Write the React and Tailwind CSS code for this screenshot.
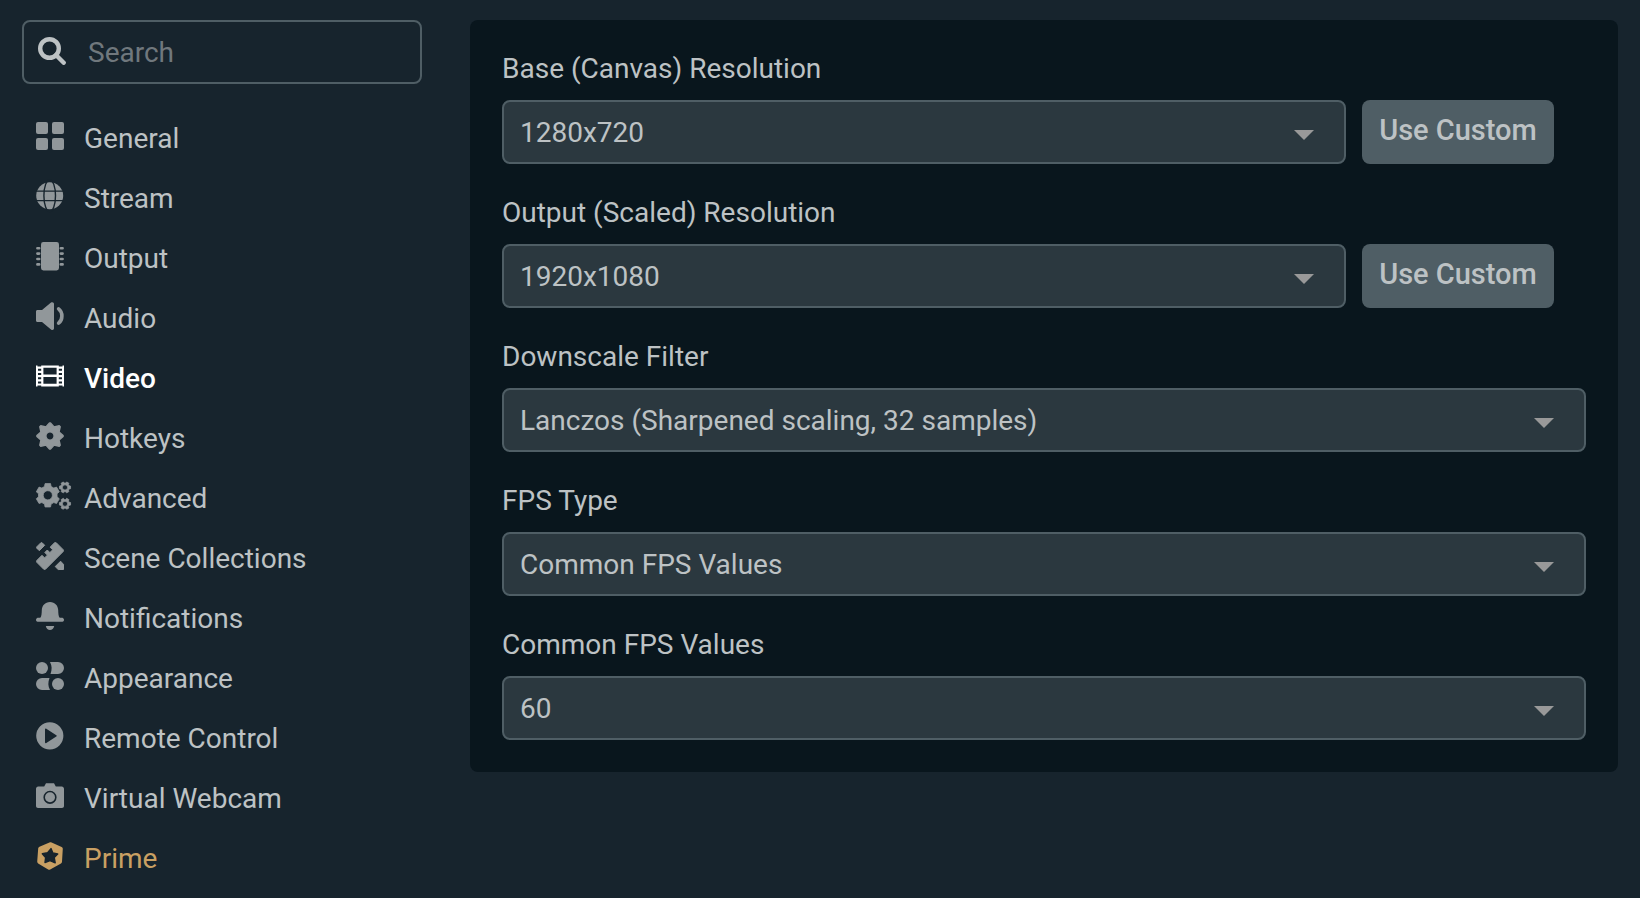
import { useState } from "react";

function gearPath(cx, cy, r, inner, hole, teeth, turn = 0) {
  const pts = [];
  const step = (Math.PI * 2) / teeth;
  for (let i = 0; i < teeth; i++) {
    const a = i * step - Math.PI / 2 + turn;
    [
      [-0.34, inner],
      [-0.22, r],
      [0.22, r],
      [0.34, inner],
    ].forEach(([f, rad]) => {
      pts.push(`${(cx + Math.cos(a + f * step) * rad).toFixed(2)} ${(cy + Math.sin(a + f * step) * rad).toFixed(2)}`);
    });
  }
  return `M${pts.join("L")}ZM${cx - hole} ${cy}a${hole} ${hole} 0 1 0 ${hole * 2} 0a${hole} ${hole} 0 1 0 ${-hole * 2} 0Z`;
}

const icons = {
  general: (
    <g>
      <rect x="0" y="0" width="12" height="12" rx="2" />
      <rect x="16" y="0" width="12" height="12" rx="2" />
      <rect x="0" y="16" width="12" height="12" rx="2" />
      <rect x="16" y="16" width="12" height="12" rx="2" />
    </g>
  ),
  stream: (
    <g>
      <circle cx="13.7" cy="13.7" r="13.5" />
      <g fill="none" stroke="#17242d" strokeWidth="1.4">
        <path d="M0 9.1h28M0 18.6h28" />
        <ellipse cx="13.7" cy="13.7" rx="5.8" ry="16" />
      </g>
    </g>
  ),
  output: (
    <g>
      <rect x="5" y="0" width="18" height="28.4" rx="2.4" />
      <path
        d="M1.400 6.300H3.200M1.400 11.600H3.200M1.400 17H3.200M1.400 22.400H3.200M24.800 6.300h1.800M24.800 11.600h1.800M24.800 17h1.800M24.800 22.400h1.800"
        fill="none"
        stroke="currentColor"
        strokeWidth="2.6"
        strokeLinecap="round"
      />
    </g>
  ),
  audio: (
    <g>
      <path d="M1.500 8H6L15 .6C16.400-.4 18 .3 18 2v24.200c0 1.700-1.600 2.200-3 1.200L6 20H1.500C.6 20 0 19.400 0 18.500v-9C0 8.600.6 8 1.500 8Z" />
      <path
        d="M22.600 6.800c4.400 3.400 4.400 11 0 14.400"
        fill="none"
        stroke="currentColor"
        strokeWidth="3.600"
        strokeLinecap="round"
      />
    </g>
  ),
  video: (
    <path
      fillRule="evenodd"
      d="M0 3.400h1.500v1h3.700v-1h17.600v1h3.700v-1H28v21h-1.500v-1h-3.700v1H5.200v-1H1.500v1H0ZM7.400 5.800v6.700h13.200V5.800ZM7.400 15v6.800h13.200V15ZM2 6.800v2H5.200v-2ZM2 11v2H5.200v-2ZM2 15.200v2H5.200v-2ZM2 19.400v2H5.200v-2ZM22.800 6.800v2H26v-2ZM22.800 11v2H26v-2ZM22.800 15.200v2H26v-2ZM22.800 19.400v2H26v-2Z"
    />
  ),
  hotkeys: (
    <path
      fillRule="evenodd"
      stroke="currentColor"
      strokeWidth="1.400"
      strokeLinejoin="round"
      d="M13.500.9h1L18.100 4.900 23.200 3.800 24.200 4.800 23.100 9.900 27.100 13.500v1L23.100 18.100 24.200 23.200 23.200 24.200 18.100 23.100 14.500 27.100h-1L9.900 23.100 4.800 24.200 3.800 23.200 4.900 18.100 .9 14.500v-1L4.900 9.900 3.800 4.800 4.800 3.800 9.900 4.900ZM14 9.900a4.100 4.100 0 1 0 0 8.200a4.100 4.100 0 1 0 0-8.200Z"
    />
  ),
  advanced: (
    <g fillRule="evenodd" stroke="currentColor" strokeWidth="0.8" strokeLinejoin="round">
      <path d={gearPath(11.8, 13.3, 12, 9.4, 4.6, 6)} />
      <path d={gearPath(29, 5.4, 5.7, 4.4, 2.6, 6, Math.PI / 6)} />
      <path d={gearPath(29, 21.8, 5.7, 4.4, 2.6, 6, Math.PI / 6)} />
    </g>
  ),
  scene: (
    <g stroke="currentColor" strokeWidth="1" strokeLinejoin="round">
      <path d="M4.800.8Q5.500.3 6.200.8L8.700 3.300 3.300 8.700.8 6.200Q.3 5.500.8 4.800Z" />
      <path d="M18.500.8Q19.400.2 20.300.8L27.200 7.700Q27.800 8.600 27.200 9.500L9.500 27.200Q8.600 27.800 7.700 27.200L.8 20.300Q.2 19.400.8 18.500L6 13.300 8.600 15.900 11.400 13.100 8.800 10.500 11.300 8 13.900 10.600 16.700 7.800 14.100 5.200Z" />
      <path d="M24.600 19.200 27.500 22.400V27.500H22.200L19.200 24.600Z" />
    </g>
  ),
  notifications: (
    <g>
      <path d="M14 0c5 0 8 3.800 8.200 8 .1 3.600.3 6.300 1.500 7.700h2.800c2 .8 2 3.600 0 4H1.500c-2-.4-2-3.200 0-4h2.800C5.500 14.300 5.700 11.600 5.800 8 6 3.800 9 0 14 0Z" />
      <path d="M9.800 24h8.400c-.5 2.600-2.200 4-4.200 4s-3.700-1.400-4.200-4Z" />
    </g>
  ),
  appearance: (
    <g>
      <circle cx="6" cy="6" r="6" />
      <circle cx="22" cy="22" r="6" />
      <path d="M14 0h8a6 6 0 0 1 0 12h-7.500c1.600-4.400 1.600-8-.5-12Z" />
      <path d="M13.500 16H6a6 6 0 0 0 0 12h8c-2.100-4-2.100-7.600-.5-12Z" />
    </g>
  ),
  remote: (
    <path
      fillRule="evenodd"
      d="M13.800.2a13.600 13.600 0 1 0 0 27.200 13.600 13.600 0 1 0 0-27.200ZM9 7.500v12.800c0 .8.700 1.100 1.300.7l10-6.400c.6-.4.600-1 0-1.400l-10-6.400C9.700 6.400 9 6.700 9 7.500Z"
    />
  ),
  webcam: (
    <g>
      <path
        fillRule="evenodd"
        d="M10 1.300h8l1.800 3.200h6C27 4.500 28 5.500 28 6.800V24c0 1.200-.9 2-2 2H2c-1.100 0-2-.8-2-2V6.800C0 5.500 1 4.500 2.200 4.500h6ZM14 8.700a6.600 6.600 0 1 0 0 13.200 6.600 6.600 0 1 0 0-13.200Z"
      />
      <circle cx="14" cy="15.300" r="5" />
    </g>
  ),
  prime: (
    <g strokeLinejoin="round">
      <path stroke="currentColor" strokeWidth="4" d="M14.800 2.200 24.800 6.700 24 19.700 13.200 25.800 3.200 19.700 4.200 6.500Z" />
      <path
        fill="#17242d"
        stroke="#17242d"
        strokeWidth="1.400"
        d="M15 6.600 16.900 11 21.700 12 18.200 15.400 19.200 20.900 14 18.700 9 20.600 9.600 15.500 6.300 11.700 11.600 10.800Z"
      />
    </g>
  ),
};

const nav = [
  ["general", "General"],
  ["stream", "Stream"],
  ["output", "Output"],
  ["audio", "Audio"],
  ["video", "Video"],
  ["hotkeys", "Hotkeys"],
  ["advanced", "Advanced"],
  ["scene", "Scene Collections"],
  ["notifications", "Notifications"],
  ["appearance", "Appearance"],
  ["remote", "Remote Control"],
  ["webcam", "Virtual Webcam"],
  ["prime", "Prime"],
];

function NavItem({ id, label, active, onSelect }) {
  let text = "text-[#bdc2c4]";
  let icon = "text-[#91979a]";
  if (active) {
    text = "text-white font-medium";
    icon = "text-white";
  } else if (id === "prime") {
    text = "text-[#c9a063]";
    icon = "text-[#c9a063]";
  }
  return (
    <li>
      <a
        href={`#${id}`}
        aria-current={active ? "page" : undefined}
        onClick={() => onSelect(id)}
        className={`flex h-[60px] items-center gap-5 pl-9 ${text}`}
      >
        <svg viewBox="0 0 28 28" fill="currentColor" aria-hidden="true" className={`mb-1 size-7 shrink-0 overflow-visible ${icon}`}>
          {icons[id]}
        </svg>
        <span className="pt-0.5">{label}</span>
      </a>
    </li>
  );
}

function Field({ id, label, value, custom }) {
  return (
    <div>
      <label htmlFor={id} className="block leading-[34px]">
        {label}
      </label>
      <div className={custom ? "mt-[14px] flex gap-4 pr-8" : "mt-[14px] flex"}>
        <div className="relative min-w-0 flex-1">
          <select
            id={id}
            defaultValue={value}
            className="block h-16 w-full appearance-none rounded-lg border-2 border-[#4f5e65] bg-[#2b383f] pl-4 pr-20 pt-0.5 text-[#bdc2c4]"
          >
            <option>{value}</option>
          </select>
          <svg
            viewBox="0 0 20 10"
            aria-hidden="true"
            className="pointer-events-none absolute right-8 top-[30px] h-[10px] w-5 fill-[#999999]"
          >
            <path d="M0 0h20L10 10Z" />
          </svg>
        </div>
        {custom && (
          <button type="button" className="h-16 w-48 shrink-0 rounded-lg bg-[#4f5e65] pb-0.5 text-[29px] font-medium text-[#bdc2c4]">
            Use Custom
          </button>
        )}
      </div>
    </div>
  );
}

export default function App() {
  const [active, setActive] = useState("video");
  return (
    <div className="flex min-h-screen items-start bg-[#17242d] pt-5 font-['Roboto',sans-serif] text-[28px] text-[#bdc2c4]">
      <aside className="w-[470px] shrink-0">
        <label className="ml-[22px] mr-12 flex h-16 items-center rounded-lg border-2 border-[#4f5e65] pl-[14px]">
          <svg viewBox="0 0 28 28" aria-hidden="true" className="mb-0.5 size-7 shrink-0 fill-none stroke-[#bdc2c4]">
            <circle cx="11.500" cy="11.500" r="9.300" strokeWidth="4.400" />
            <path d="M18 18 25.700 25.700" strokeWidth="4.400" strokeLinecap="round" />
          </svg>
          <input
            type="text"
            aria-label="Search"
            placeholder="Search"
            className="ml-[22px] w-full min-w-0 bg-transparent pt-0.5 outline-none placeholder:text-[#70787d]"
          />
        </label>
        <nav className="mt-6">
          <ul>
            {nav.map(([id, label]) => (
              <NavItem key={id} id={id} label={label} active={id === active} onSelect={setActive} />
            ))}
          </ul>
        </nav>
      </aside>
      <main className="mr-[22px] flex min-w-0 flex-1 flex-col gap-8 rounded-lg bg-[#09161d] p-8">
        <Field id="base-resolution" label="Base (Canvas) Resolution" value="1280x720" custom />
        <Field id="output-resolution" label="Output (Scaled) Resolution" value="1920x1080" custom />
        <Field id="downscale-filter" label="Downscale Filter" value="Lanczos (Sharpened scaling, 32 samples)" />
        <Field id="fps-type" label="FPS Type" value="Common FPS Values" />
        <Field id="fps-common" label="Common FPS Values" value="60" />
      </main>
    </div>
  );
}
